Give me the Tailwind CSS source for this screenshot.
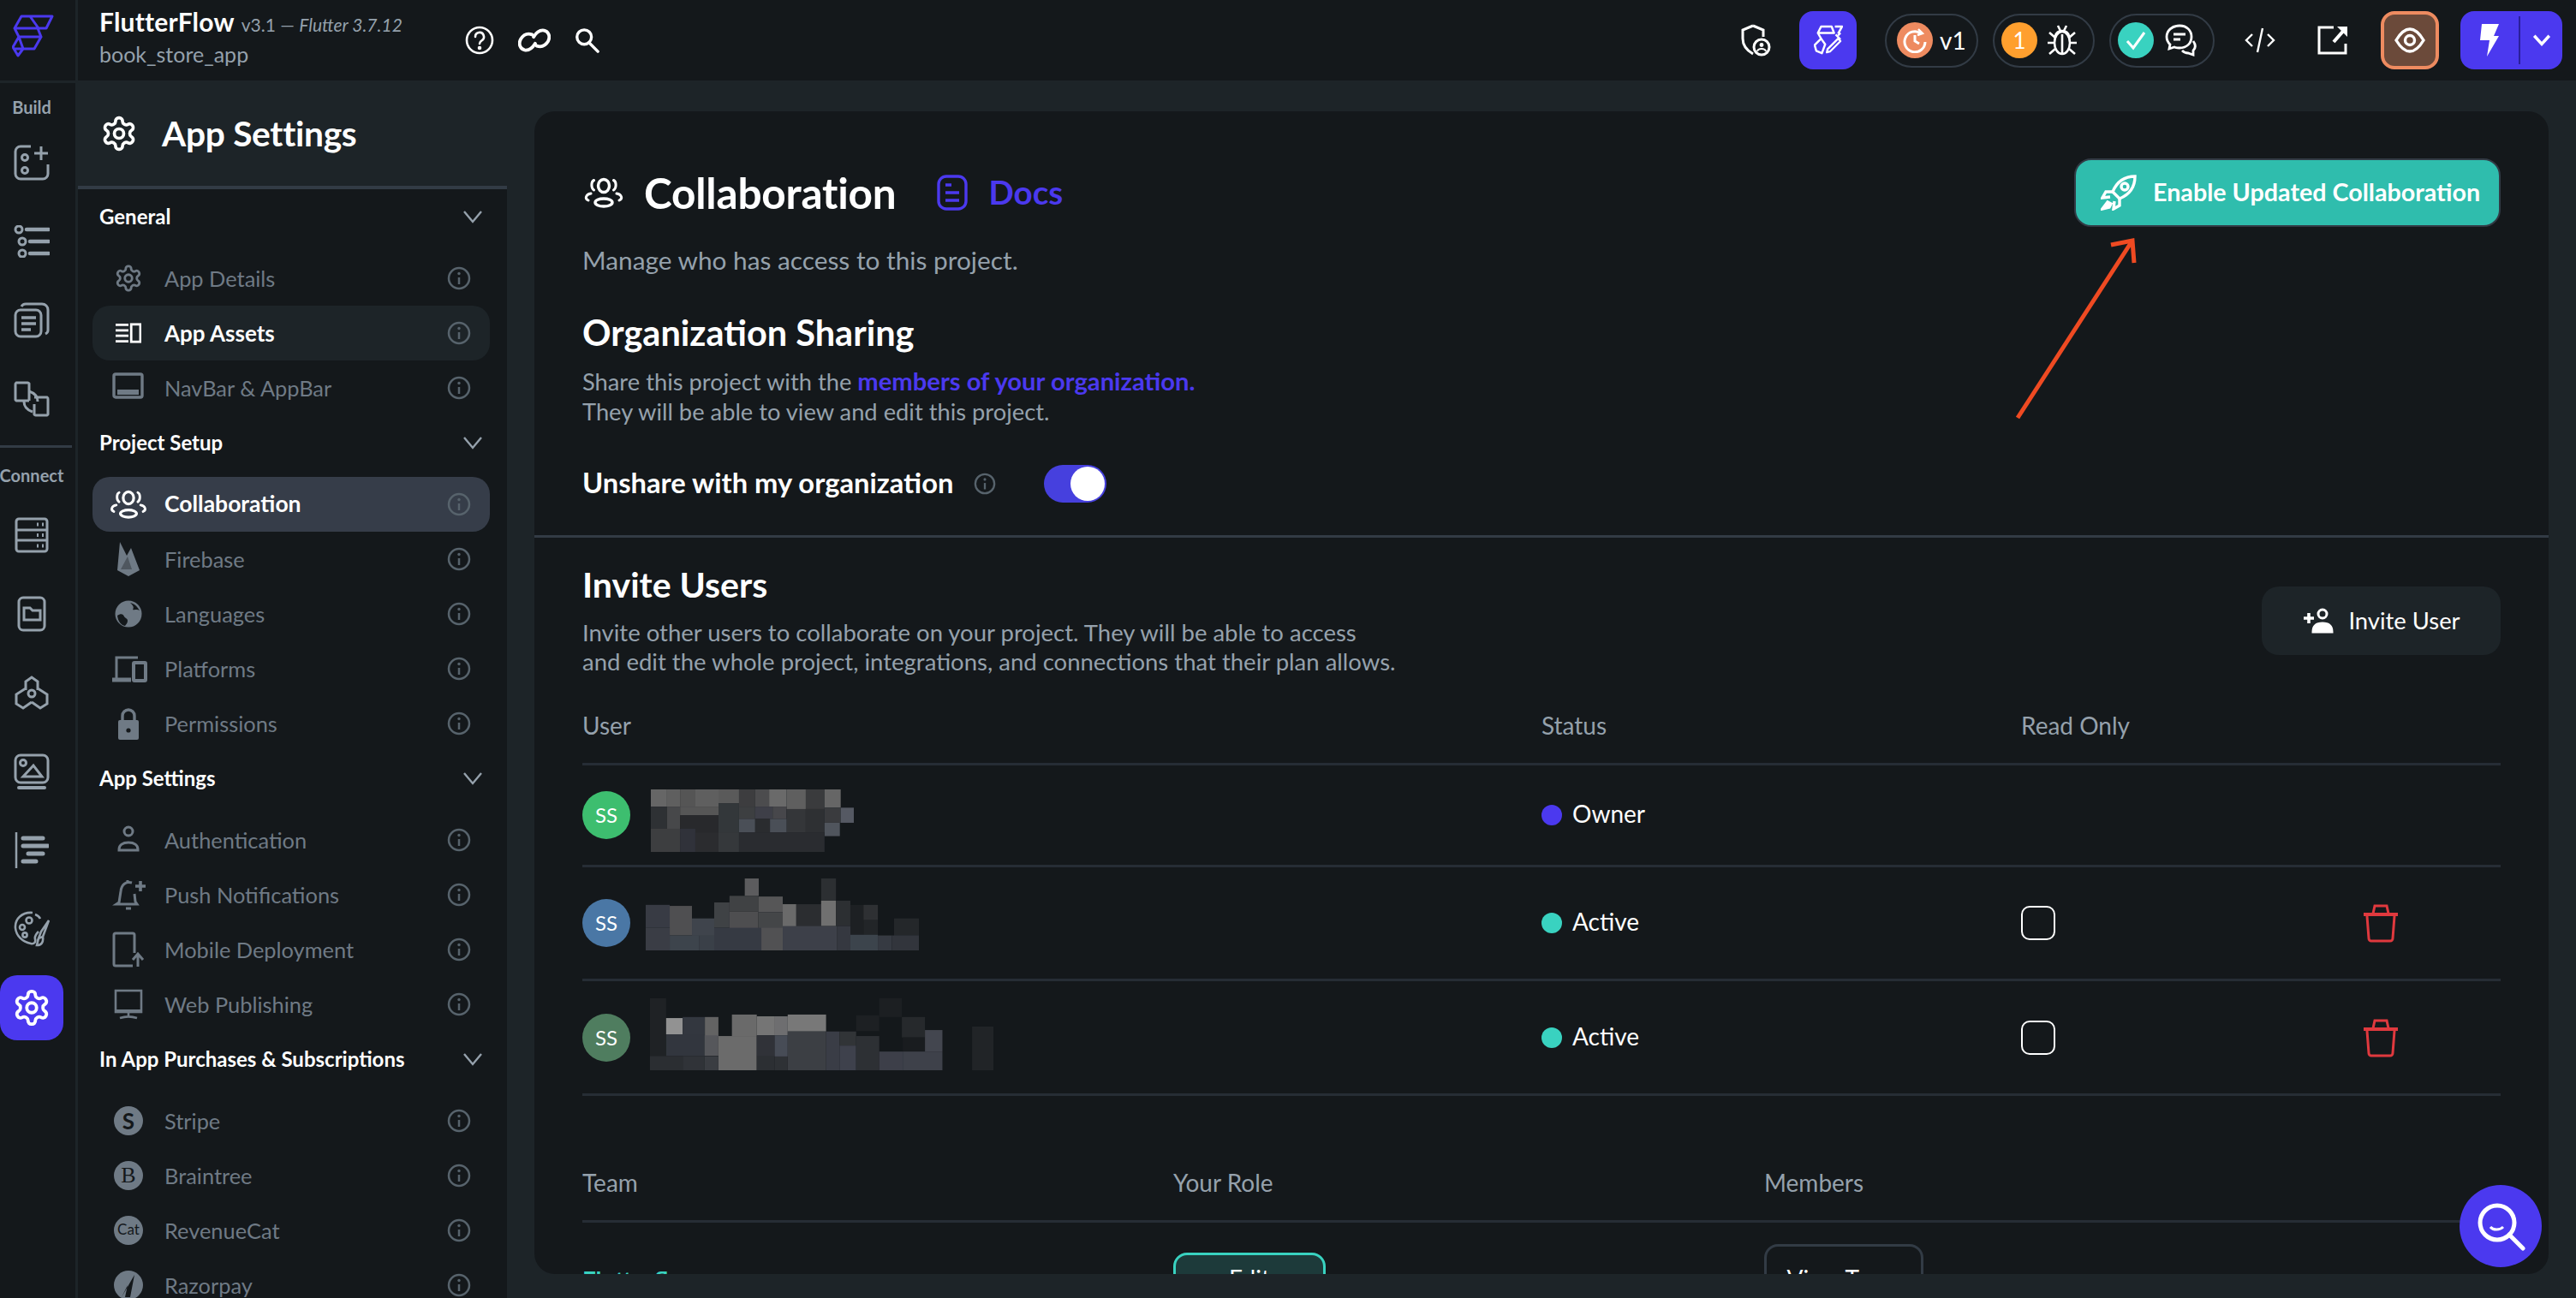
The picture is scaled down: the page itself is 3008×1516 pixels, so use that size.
<!DOCTYPE html>
<html lang="en">
  <head>
    <meta charset="UTF-8" />
    <title>FlutterFlow - App Settings</title>
    <script src="https://cdn.jsdelivr.net/npm/@tailwindcss/browser@4"></script>
  </head>
  <body class="bg-[#1d2428] font-['Lato',sans-serif]">
    <!-- shared icons -->
    <svg class="hidden">
      <symbol id="info" viewBox="0 0 28 28"><circle cx="14" cy="14" r="12" fill="none" stroke="currentColor" stroke-width="2.5" /><path d="M14 13v8" stroke="currentColor" stroke-width="2.5" /><circle cx="14" cy="8.5" r="1.7" fill="currentColor" /></symbol>
      <symbol id="chev" viewBox="0 0 24 16"><path d="M2 2l10 12L22 2" fill="none" stroke="currentColor" stroke-width="2.4" /></symbol>
      <symbol id="gear" viewBox="0 0 24 24"><path fill="none" stroke="currentColor" stroke-width="2" stroke-linejoin="round" d="M12.22 2h-.44a2 2 0 0 0-2 2v.18a2 2 0 0 1-1 1.73l-.43.25a2 2 0 0 1-2 0l-.15-.08a2 2 0 0 0-2.73.73l-.22.38a2 2 0 0 0 .73 2.73l.15.1a2 2 0 0 1 1 1.72v.51a2 2 0 0 1-1 1.74l-.15.09a2 2 0 0 0-.73 2.73l.22.38a2 2 0 0 0 2.73.73l.15-.08a2 2 0 0 1 2 0l.43.25a2 2 0 0 1 1 1.73V20a2 2 0 0 0 2 2h.44a2 2 0 0 0 2-2v-.18a2 2 0 0 1 1-1.73l.43-.25a2 2 0 0 1 2 0l.15.08a2 2 0 0 0 2.73-.73l.22-.39a2 2 0 0 0-.73-2.73l-.15-.08a2 2 0 0 1-1-1.74v-.5a2 2 0 0 1 1-1.74l.15-.09a2 2 0 0 0 .73-2.73l-.22-.38a2 2 0 0 0-2.73-.73l-.15.08a2 2 0 0 1-2 0l-.43-.25a2 2 0 0 1-1-1.73V4a2 2 0 0 0-2-2z" /><circle cx="12" cy="12" r="3" fill="none" stroke="currentColor" stroke-width="2" /></symbol>
      <symbol id="team" viewBox="0 0 46 36"><ellipse cx="23" cy="10" rx="6.5" ry="7.5" fill="none" stroke="currentColor" stroke-width="3.4" /><ellipse cx="23" cy="29.5" rx="10" ry="4.5" fill="none" stroke="currentColor" stroke-width="3.4" /><path d="M11.5 3.5C8 5 8 13 11.5 15M34.5 3.5C38 5 38 13 34.5 15M8 19C2 20 0.5 25 5 27M38 19c6 1 7.5 6 3 8" fill="none" stroke="currentColor" stroke-width="3" stroke-linecap="round" /></symbol>
      <symbol id="trash" viewBox="0 0 40 46"><path d="M0 13h40" stroke="currentColor" stroke-width="4" /><path d="M11 12l2-9h14l2 9M4 15l2 26a3 3 0 0 0 3 3h22a3 3 0 0 0 3-3l2-26" fill="none" stroke="currentColor" stroke-width="3" /></symbol>
    </svg>

    <div class="relative w-[3008px] h-[1516px] overflow-hidden flex flex-col">
      <!-- top bar -->
      <header class="h-[94px] shrink-0 bg-[#14181b] flex items-center text-white">
        <div class="w-[91px] h-full shrink-0 border-r-[3px] border-[#1d2428] pl-[14px] flex items-center">
          <svg class="w-[50px] h-[52px] mb-[8px] text-[#4b39ef]" viewBox="14 17 50 52" fill="none" stroke="currentColor" stroke-width="3" stroke-linejoin="round" stroke-linecap="round"><path d="M25 19H61L54 33H17zM35 19L45 33M17 33L22 43H48L40 57H27M44 33L48 43M22 43L15 55L21 65L27 57M22 43L27 57M17 57H27" /></svg>
        </div>
        <div class="pl-[25px] w-[429px] shrink-0">
          <div class="flex items-baseline gap-[8px] h-[32px] whitespace-nowrap">
            <span class="text-[30px] leading-[32px] font-bold tracking-[0.2px]">FlutterFlow</span>
            <span class="text-[21px] leading-[32px] text-[#95a1ac]">v3.1 — <i>Flutter 3.7.12</i></span>
          </div>
          <div class="text-[25px] leading-[44px] text-[#95a1ac]">book_store_app</div>
        </div>
        <svg class="w-[34px] h-[34px] ml-[23px]" viewBox="0 0 34 34" fill="none" stroke="currentColor" stroke-width="2.6"><circle cx="17" cy="17" r="15" /><path d="M12 13a5 5 0 1 1 7.5 4.3c-1.7 1-2.5 1.9-2.5 3.7" stroke-linecap="round" /><circle cx="17" cy="26" r="1" fill="currentColor" /></svg>
        <svg class="w-[38px] h-[32px] ml-[28px]" viewBox="0 0 40 32" fill="none" stroke="currentColor" stroke-width="4"><path d="M17 9C11 7 6 10 3 15c-3 6 0 12 5 13 6 1 10-3 13-8M23 23c6 2 11-1 14-6 3-6 0-12-5-13-6-1-10 3-13 8" stroke-linecap="round" /></svg>
        <svg class="w-[30px] h-[32px] ml-[27px]" viewBox="0 0 32 32" fill="none" stroke="currentColor" stroke-width="3.6"><circle cx="13" cy="12" r="9" /><path d="M19 19l11 11" stroke-linecap="round" /></svg>

        <div class="ml-auto flex items-center pr-[16px]">
          <svg class="w-[36px] h-[38px]" viewBox="0 0 36 38" fill="none" stroke="currentColor" stroke-width="3"><path d="M15 2l12 5v8M15 2L3 7v10c0 8 5 14 12 18" /><circle cx="25" cy="27" r="9" /><circle cx="25" cy="24.5" r="2.4" fill="currentColor" stroke="none" /><path d="M20 32c1-4 9-4 10 0" stroke-width="2" /></svg>
          <button class="ml-[33px] w-[67px] h-[68px] rounded-[16px] bg-[#4b39ef] flex items-center justify-center">
            <svg class="w-[34px] h-[36px]" viewBox="0 0 36 38" fill="none" stroke="currentColor" stroke-width="2.6" stroke-linejoin="round"><path d="M9 2h13l3 8H5zM26 2h9l-5 9M5 10l4 7" /><path d="M9 17l5 7-4 11-7-3-2-7z" /><path d="M17 30l13-13 3 3-13 13-4 1zM27 12l6 6M33 10l-3 3" stroke-width="2.4" /></svg>
          </button>
          <div class="ml-[33px] w-[109px] h-[63px] rounded-full border-2 border-[#323b45] flex items-center pl-[12px]">
            <div class="w-[42px] h-[42px] rounded-full bg-[#ee8b60] flex items-center justify-center">
              <svg class="w-[30px] h-[30px]" viewBox="0 0 30 30" fill="none" stroke="#fff" stroke-width="3"><path d="M22 7a12 12 0 1 0 5 10" /><path d="M15 9v7l5 3" /><path d="M19 2l5 5-6 2" stroke-width="2.4" /></svg>
            </div>
            <span class="ml-[8px] text-[28px]">v1</span>
          </div>
          <div class="ml-[17px] w-[119px] h-[63px] rounded-full border-2 border-[#323b45] flex items-center pl-[8px]">
            <div class="w-[42px] h-[42px] rounded-full bg-[#ff9f2e] flex items-center justify-center text-[26px]">1</div>
            <svg class="w-[36px] h-[38px] ml-[11px]" viewBox="0 0 36 38" fill="none" stroke="currentColor" stroke-width="2.6"><ellipse cx="18" cy="22" rx="9" ry="13" /><path d="M10 14c2-8 14-8 16 0M18 12v23M13 2l3 6M23 2l-3 6M1 22h8M27 22h8M3 10l7 6M33 10l-7 6M3 35l7-6M33 35l-7-6" /></svg>
          </div>
          <div class="ml-[17px] w-[123px] h-[63px] rounded-full border-2 border-[#323b45] flex items-center pl-[8px]">
            <div class="w-[42px] h-[42px] rounded-full bg-[#39d2c0] flex items-center justify-center">
              <svg class="w-[26px] h-[24px]" viewBox="0 0 26 24" fill="none" stroke="#fff" stroke-width="3"><path d="M3 13l7 8L23 3" /></svg>
            </div>
            <svg class="w-[38px] h-[38px] ml-[13px]" viewBox="0 0 38 38" fill="none" stroke="currentColor" stroke-width="2.8"><path d="M17 2C8 2 2 8 2 15c0 4 2 7 4 9l-1 5 6-2c2 1 4 1 6 1 9 0 14-6 14-13S26 2 17 2z" /><path d="M10 12h14M10 18h8" /><path d="M33 20c3 4 3 8 0 11v5l-6-2c-3 0-5-1-7-3" /></svg>
          </div>
          <svg class="w-[36px] h-[32px] ml-[35px]" viewBox="0 0 36 32" fill="none" stroke="currentColor" stroke-width="2.4"><path d="M9 9l-7 7 7 7M27 9l7 7-7 7M21 2l-6 28" /></svg>
          <svg class="w-[38px] h-[36px] ml-[48px]" viewBox="0 0 38 36" fill="none" stroke="currentColor" stroke-width="3"><path d="M20 3H3v30h31V22M3 3" /><path d="M20 20L34 4" stroke-width="4" /><path d="M24 2h12v12z" fill="currentColor" stroke="none" /></svg>
          <button class="ml-[37px] w-[68px] h-[68px] rounded-[16px] bg-[#6b4a3a] border-[4px] border-[#ee8b60] flex items-center justify-center">
            <svg class="w-[36px] h-[30px]" viewBox="0 0 36 30" fill="none" stroke="currentColor" stroke-width="3.4"><path d="M2 15C8 5 13 2 18 2s10 3 16 13c-6 10-11 13-16 13S8 25 2 15z" /><circle cx="18" cy="15" r="5.5" /></svg>
          </button>
          <button class="ml-[25px] w-[119px] h-[68px] rounded-[16px] bg-[#4b39ef] flex items-center">
            <span class="w-[68px] flex justify-center">
              <svg class="w-[24px] h-[38px]" viewBox="0 0 24 38" fill="currentColor"><path d="M3 0h20l-6 14h6L9 38l3-19H1z" /></svg>
            </span>
            <span class="h-[56px] border-l-2 border-[#2a1f9c]"></span>
            <span class="flex-1 flex justify-center">
              <svg class="w-[22px] h-[14px]" viewBox="0 0 24 16" fill="none" stroke="currentColor" stroke-width="4"><path d="M2 2l10 11L22 2" /></svg>
            </span>
          </button>
        </div>
      </header>

      <div class="flex flex-1 min-h-0">
        <!-- icon rail -->
        <nav class="w-[91px] shrink-0 bg-[#14181b] border-r-[3px] border-[#1d2428]">
          <div class="w-[88px] border-t-[3px] border-[#1d2428] text-[#95a1ac]">
            <div class="w-[74px] flex flex-col items-center">
              <div class="pt-[16px] pb-[7px] text-[20px] leading-[24px] font-bold">Build</div>
              <div class="h-[92px] flex items-center">
                <svg class="w-[42px] h-[42px]" viewBox="0 0 42 42" fill="none" stroke="currentColor" stroke-width="3"><path d="M20 2H8a6 6 0 0 0-6 6v26a6 6 0 0 0 6 6h26a6 6 0 0 0 6-6v-11" /><circle cx="13" cy="15" r="3.5" /><circle cx="13" cy="30" r="3.5" /><path d="M32 2v16M24 10h16" /></svg>
              </div>
              <div class="h-[92px] flex items-center">
                <svg class="w-[42px] h-[38px]" viewBox="0 0 42 38" fill="none" stroke="currentColor" stroke-width="3"><circle cx="6" cy="5" r="4" /><circle cx="10" cy="19" r="4" /><circle cx="10" cy="33" r="4" /><path d="M15 5h26M19 19h22M19 33h22" stroke-width="4.5" stroke-linecap="round" /></svg>
              </div>
              <div class="h-[92px] flex items-center">
                <svg class="w-[42px] h-[42px]" viewBox="0 0 42 42" fill="none" stroke="currentColor" stroke-width="3"><rect x="2" y="9" width="30" height="31" rx="6" /><path d="M9 5c1-2 3-3 5-3h19c4 0 7 3 7 7v24c0 2-1 3-3 4M7 4" /><path d="M9 18h17M9 25h17M9 32h11" stroke-width="3.4" /></svg>
              </div>
              <div class="h-[92px] flex items-center">
                <svg class="w-[42px] h-[42px]" viewBox="0 0 42 42" fill="none" stroke="currentColor" stroke-width="3"><path d="M18 23v-5a2 2 0 0 0 0 0V3a2 2 0 0 0-2-1H3a2 2 0 0 0-1 2v18a2 2 0 0 0 1 1h15" /><path d="M24 19h15a2 2 0 0 1 1 2v18a2 2 0 0 1-1 1H26a2 2 0 0 1-2-1V27" /><path d="M12 24c0 6 4 10 10 12M18 12c6 2 10 6 10 12" /></svg>
              </div>
            </div>
            <div class="mt-[8px] h-[3px] w-[84px] bg-[#323b45]"></div>
            <div class="w-[74px] flex flex-col items-center">
              <div class="pt-[20px] pb-[12px] text-[20px] leading-[24px] font-bold whitespace-nowrap">Connect</div>
              <div class="h-[92px] flex items-center">
                <svg class="w-[40px] h-[42px]" viewBox="0 0 40 42" fill="none" stroke="currentColor" stroke-width="3"><rect x="2" y="2" width="36" height="38" rx="3" /><path d="M2 15h36M2 27h36" /><path d="M26 8.5h2M32 8.5h2M26 21h2M32 21h2M26 33.5h2M32 33.5h2" stroke-width="4" /></svg>
              </div>
              <div class="h-[92px] flex items-center">
                <svg class="w-[34px] h-[42px]" viewBox="0 0 34 42" fill="none" stroke="currentColor" stroke-width="3"><rect x="2" y="2" width="30" height="38" rx="5" /><path d="M8 14h7l3 3h9v11H8z" /></svg>
              </div>
              <div class="h-[92px] flex items-center">
                <svg class="w-[42px] h-[42px]" viewBox="0 0 42 42" fill="none" stroke="currentColor" stroke-width="3"><path d="M14 18V8l7-5 7 5v10M14 16L3 23v11l8 5 10-7M28 16l11 7v11l-8 5-10-7" /><circle cx="21" cy="22" r="4" /></svg>
              </div>
              <div class="h-[92px] flex items-center">
                <svg class="w-[42px] h-[42px]" viewBox="0 0 42 42" fill="none" stroke="currentColor" stroke-width="3"><rect x="2" y="2" width="38" height="32" rx="6" /><circle cx="11" cy="11" r="3.5" /><path d="M11 27l12-13 10 13z" /><path d="M6 40h30" stroke-width="4" stroke-linecap="round" /></svg>
              </div>
              <div class="h-[92px] flex items-center">
                <svg class="w-[40px] h-[42px]" viewBox="0 0 40 42" fill="none" stroke="currentColor"><path d="M2 0v42" stroke-width="2.5" /><path d="M10 7h23M10 16h29M16 25h17M10 34h15" stroke-width="5" stroke-linecap="round" /></svg>
              </div>
              <div class="h-[92px] flex items-center">
                <svg class="w-[42px] h-[42px]" viewBox="0 0 42 42" fill="none" stroke="currentColor" stroke-width="2.6"><path d="M22 2C10 1 1 9 2 20c1 9 8 16 18 18 4 1 6-2 5-5-1-4 2-7 4-9M25 4c3 1 5 3 6 5" /><circle cx="18" cy="11" r="3.5" /><circle cx="10" cy="19" r="3" /><circle cx="13" cy="28" r="2.6" /><path d="M41 11L32 24l-3 8 5-2zM29 32l-2 8c5 0 8-3 7-10" /></svg>
              </div>
              <a class="mt-[8px] w-[74px] h-[76px] rounded-[20px] bg-[#4b39ef] flex items-center justify-center text-white">
                <svg class="w-[46px] h-[46px]"><use href="#gear" /></svg>
              </a>
            </div>
          </div>
        </nav>

        <!-- settings menu -->
        <aside class="w-[501px] shrink-0 bg-[#14181b] text-[#6f7a85] text-[25.4px] overflow-hidden">
          <div class="h-[127px] bg-[#1d2428] border-b-[4px] border-[#323b45] flex items-center pl-[26px] text-white">
            <svg class="w-[44px] h-[44px]"><use href="#gear" /></svg>
            <span class="ml-[28px] text-[40.7px] font-bold tracking-[-0.3px]">App Settings</span>
          </div>

          <div class="h-16 flex items-center justify-between pl-[25px] pr-[28px] text-[24px] text-white font-bold"><span>General</span><svg class="w-[24px] h-[16px] text-[#95a1ac]"><use href="#chev" /></svg></div>
          <div class="mt-2 ml-[17px] mr-[20px]">
            <a class="h-16 flex items-center pl-[20px] pr-[22px]">
              <svg class="w-[44px] h-[44px] shrink-0 p-[5px]"><use href="#gear" /></svg><span class="ml-[20px]">App Details</span><svg class="ml-auto w-[28px] h-[28px] text-[#57636c]"><use href="#info" /></svg>
            </a>
            <a class="h-16 flex items-center pl-[20px] pr-[22px] rounded-[20px] bg-[#1d2428] text-white text-[26px] font-bold">
              <svg class="w-[44px] h-[44px] shrink-0 p-[7px]" viewBox="0 0 28 22" fill="none" stroke="currentColor" stroke-width="2.6"><path d="M0 2h14M0 8h14M0 14h14M0 20h14" /><rect x="17" y="1.5" width="10" height="19" /></svg><span class="ml-[20px]">App Assets</span><svg class="ml-auto w-[28px] h-[28px] text-[#57636c]"><use href="#info" /></svg>
            </a>
            <a class="h-16 flex items-center pl-[20px] pr-[22px]">
              <svg class="w-[44px] h-[44px] shrink-0" viewBox="0 0 44 44" fill="none" stroke="currentColor" stroke-width="3.4"><rect x="5" y="6" width="33" height="27" rx="2" /><path d="M9 27h25" stroke-width="6" /></svg><span class="ml-[20px]">NavBar &amp; AppBar</span><svg class="ml-auto w-[28px] h-[28px] text-[#57636c]"><use href="#info" /></svg>
            </a>
          </div>

          <div class="h-16 flex items-center justify-between pl-[25px] pr-[28px] text-[24px] text-white font-bold"><span>Project Setup</span><svg class="w-[24px] h-[16px] text-[#95a1ac]"><use href="#chev" /></svg></div>
          <div class="mt-2 ml-[17px] mr-[20px]">
            <a class="h-16 flex items-center pl-[20px] pr-[22px] rounded-[20px] bg-[#363d49] text-white text-[26.5px] font-bold">
              <svg class="w-[44px] h-[34px] shrink-0"><use href="#team" /></svg><span class="ml-[20px]">Collaboration</span><svg class="ml-auto w-[28px] h-[28px] text-[#57636c]"><use href="#info" /></svg>
            </a>
            <a class="h-16 flex items-center pl-[20px] pr-[22px]">
              <svg class="w-[44px] h-[44px] shrink-0" viewBox="0 0 44 44" fill="#6f7a85"><path d="M9 35L12 2l8 16 5-9 10 26-13 7z" /><path d="M13 34l8-15 5 15z" fill="#14181b" opacity=".35" /></svg><span class="ml-[20px]">Firebase</span><svg class="ml-auto w-[28px] h-[28px] text-[#57636c]"><use href="#info" /></svg>
            </a>
            <a class="h-16 flex items-center pl-[20px] pr-[22px]">
              <svg class="w-[44px] h-[44px] shrink-0" viewBox="0 0 44 44"><circle cx="22" cy="22" r="15.5" fill="currentColor" /><path d="M9 24c4-3 7-2 8 1 1 2 4 2 4 5 0 3-2 4-3 6-5-1-8-5-9-12zM24 9c3 3 5 5 3 8 2 1 5-1 8 1-3-5-6-8-11-9z" fill="#14181b" /></svg><span class="ml-[20px]">Languages</span><svg class="ml-auto w-[28px] h-[28px] text-[#57636c]"><use href="#info" /></svg>
            </a>
            <a class="h-16 flex items-center pl-[20px] pr-[22px]">
              <svg class="w-[44px] h-[44px] shrink-0" viewBox="0 0 44 44" fill="none" stroke="currentColor" stroke-width="3"><path d="M33 9H8v24" /><path d="M3 35h22" stroke-width="5" /><rect x="28" y="15" width="14" height="21" rx="1" stroke-width="4" /></svg><span class="ml-[20px]">Platforms</span><svg class="ml-auto w-[28px] h-[28px] text-[#57636c]"><use href="#info" /></svg>
            </a>
            <a class="h-16 flex items-center pl-[20px] pr-[22px]">
              <svg class="w-[44px] h-[44px] shrink-0" viewBox="0 0 44 44"><path d="M15 19v-6a7 7 0 0 1 14 0v6" fill="none" stroke="currentColor" stroke-width="3.4" /><rect x="10" y="18" width="24" height="23" rx="2" fill="currentColor" /><circle cx="22" cy="30" r="2.6" fill="#14181b" /></svg><span class="ml-[20px]">Permissions</span><svg class="ml-auto w-[28px] h-[28px] text-[#57636c]"><use href="#info" /></svg>
            </a>
          </div>

          <div class="h-16 flex items-center justify-between pl-[25px] pr-[28px] text-[24px] text-white font-bold"><span>App Settings</span><svg class="w-[24px] h-[16px] text-[#95a1ac]"><use href="#chev" /></svg></div>
          <div class="mt-2 ml-[17px] mr-[20px]">
            <a class="h-16 flex items-center pl-[20px] pr-[22px]">
              <svg class="w-[44px] h-[44px] shrink-0" viewBox="0 0 44 44" fill="none" stroke="currentColor" stroke-width="3"><circle cx="22" cy="12" r="5" /><path d="M11 33c0-5 4-8 11-8s11 3 11 8v1H11z" /></svg><span class="ml-[20px]">Authentication</span><svg class="ml-auto w-[28px] h-[28px] text-[#57636c]"><use href="#info" /></svg>
            </a>
            <a class="h-16 flex items-center pl-[20px] pr-[22px]">
              <svg class="w-[44px] h-[44px] shrink-0" viewBox="0 0 44 44" fill="none" stroke="currentColor" stroke-width="3"><path d="M26 8c-7-2-12 2-13 10l-2 13-3 2h24l-2-3-1-9" /><path d="M19 38h6M21 8V5" /><path d="M36 6v12M30 12h12" stroke-width="3.6" /></svg><span class="ml-[20px]">Push Notifications</span><svg class="ml-auto w-[28px] h-[28px] text-[#57636c]"><use href="#info" /></svg>
            </a>
            <a class="h-16 flex items-center pl-[20px] pr-[22px]">
              <svg class="w-[44px] h-[44px] shrink-0" viewBox="0 0 44 44" fill="none" stroke="currentColor" stroke-width="3"><path d="M29 26V5a2 2 0 0 0-2-2H7a2 2 0 0 0-2 2v34a2 2 0 0 0 2 2h20" /><path d="M33 42V28M27 34l6-7 6 7" stroke-width="3" /></svg><span class="ml-[20px]">Mobile Deployment</span><svg class="ml-auto w-[28px] h-[28px] text-[#57636c]"><use href="#info" /></svg>
            </a>
            <a class="h-16 flex items-center pl-[20px] pr-[22px]">
              <svg class="w-[44px] h-[44px] shrink-0" viewBox="0 0 44 44" fill="none" stroke="currentColor" stroke-width="2.6"><rect x="7" y="6" width="30" height="25" /><path d="M7 30h30" stroke-width="4" /><path d="M22 32v4M12 38c6-2 14-2 20 0" /></svg><span class="ml-[20px]">Web Publishing</span><svg class="ml-auto w-[28px] h-[28px] text-[#57636c]"><use href="#info" /></svg>
            </a>
          </div>

          <div class="h-16 flex items-center justify-between pl-[25px] pr-[28px] text-[24px] text-white font-bold"><span>In App Purchases &amp; Subscriptions</span><svg class="w-[24px] h-[16px] text-[#95a1ac]"><use href="#chev" /></svg></div>
          <div class="mt-2 ml-[17px] mr-[20px]">
            <a class="h-16 flex items-center pl-[20px] pr-[22px]">
              <span class="w-[44px] shrink-0 flex justify-center"><span class="w-[34px] h-[34px] rounded-full bg-[#6f7a85] text-[#14181b] text-[26px] font-bold leading-[34px] text-center">S</span></span><span class="ml-[20px]">Stripe</span><svg class="ml-auto w-[28px] h-[28px] text-[#57636c]"><use href="#info" /></svg>
            </a>
            <a class="h-16 flex items-center pl-[20px] pr-[22px]">
              <span class="w-[44px] shrink-0 flex justify-center"><span class="w-[34px] h-[34px] rounded-full bg-[#6f7a85] text-[#14181b] text-[26px] font-['Liberation_Serif',serif] leading-[34px] text-center">B</span></span><span class="ml-[20px]">Braintree</span><svg class="ml-auto w-[28px] h-[28px] text-[#57636c]"><use href="#info" /></svg>
            </a>
            <a class="h-16 flex items-center pl-[20px] pr-[22px]">
              <span class="w-[44px] shrink-0 flex justify-center"><span class="w-[34px] h-[34px] rounded-full bg-[#6f7a85] text-[#14181b] text-[17px] leading-[32px] text-center">Cat</span></span><span class="ml-[20px]">RevenueCat</span><svg class="ml-auto w-[28px] h-[28px] text-[#57636c]"><use href="#info" /></svg>
            </a>
            <a class="h-16 flex items-center pl-[20px] pr-[22px]">
              <svg class="w-[44px] h-[44px] shrink-0" viewBox="0 0 44 44"><circle cx="22" cy="22" r="17" fill="currentColor" /><path d="M29 10l-5 26h-6l3-14-7 14z" fill="#14181b" /></svg><span class="ml-[20px]">Razorpay</span><svg class="ml-auto w-[28px] h-[28px] text-[#57636c]"><use href="#info" /></svg>
            </a>
          </div>
        </aside>

        <!-- main panel -->
        <main class="flex-1 pt-[36px] px-[32px]">
          <div class="h-[1358px] rounded-[24px] bg-[#14181b] overflow-hidden text-white">
            <section class="pt-[55px] px-[56px] pb-[38px]">
              <div class="flex items-center h-[80px]">
                <svg class="w-[46px] h-[36px] ml-[2px]"><use href="#team" /></svg>
                <h1 class="ml-[24px] text-[49.5px] leading-[60px] font-bold tracking-[-0.2px]">Collaboration</h1>
                <svg class="ml-[47px] w-[36px] h-[42px] text-[#4b39ef]" viewBox="0 0 36 42" fill="none" stroke="currentColor" stroke-width="3.4"><rect x="2" y="2" width="32" height="38" rx="9" /><path d="M10 12h7M10 21h16M10 30h16" /></svg>
                <span class="ml-[25px] text-[38.5px] font-bold text-[#4b39ef]">Docs</span>
                <button class="ml-auto w-[498px] h-[80px] rounded-[20px] bg-[#2fbdad] border-2 border-[#323b45] flex items-center pl-[29px] text-[28.7px] font-bold whitespace-nowrap">
                  <svg class="w-[42px] h-[42px] shrink-0" viewBox="0 0 42 42" fill="none" stroke="currentColor" stroke-width="3.4"><path d="M40 2c-12 0-21 6-26 18l8 8c12-5 18-14 18-26z" /><circle cx="28" cy="14" r="4" /><path d="M14 20H6l-4 7 9-1M22 28v8l-7 4 1-9" /><path d="M8 32l-6 8 8-2 2-4z" fill="currentColor" /></svg>
                  <span class="ml-[19px]">Enable Updated Collaboration</span>
                </button>
              </div>
              <p class="mt-[21px] text-[29.8px] leading-[36px] text-[#95a1ac]">Manage who has access to this project.</p>
              <h2 class="mt-[42px] text-[41.5px] leading-[48px] font-bold">Organization Sharing</h2>
              <p class="mt-[15px] h-[71px] text-[27.3px] leading-[35px] text-[#95a1ac]">Share this project with the <span class="text-[29.2px] leading-[35px] text-[#4b39ef] font-bold">members of your organization.</span><br />They will be able to view and edit this project.</p>
              <div class="mt-[45px] flex items-center h-[44px]">
                <span class="pb-[3px] text-[32.7px] font-bold">Unshare with my organization</span>
                <svg class="ml-[24px] w-[26px] h-[26px] text-[#57636c]"><use href="#info" /></svg>
                <div class="ml-[56px] w-[73px] h-[44px] rounded-full bg-[#4640de] flex items-center justify-end pr-[2px]">
                  <div class="w-[40px] h-[40px] rounded-full bg-white"></div>
                </div>
              </div>
            </section>

            <section class="border-t-[3px] border-[#323b45] pt-[31px] px-[56px]">
              <div class="flex items-start justify-between">
                <div>
                  <h2 class="text-[41px] leading-[48px] font-bold">Invite Users</h2>
                  <p class="mt-[15px] text-[27.5px] leading-[34px] text-[#95a1ac]">Invite other users to collaborate on your project. They will be able to access<br />and edit the whole project, integrations, and connections that their plan allows.</p>
                </div>
                <button class="mt-[26px] w-[279px] h-[80px] rounded-[20px] bg-[#1d2428] flex items-center justify-center text-[27.4px]">
                  <svg class="w-[40px] h-[30px]" viewBox="0 0 40 30" fill="none" stroke="currentColor" stroke-width="3"><circle cx="24" cy="7" r="5" /><path d="M13 28c0-7 4-10 11-10s11 3 11 10z" fill="currentColor" /><path d="M8 6v12M2 12h12" stroke-width="3.6" /></svg>
                  <span class="ml-[14px]">Invite User</span>
                </button>
              </div>

              <div class="mt-[39px] grid grid-cols-[1120px_560px_1fr] pb-[26px] border-b-[3px] border-[#262d35] text-[28px] leading-[36px] text-[#95a1ac]">
                <span>User</span><span>Status</span><span>Read Only</span>
              </div>

              <div class="h-[119px] grid grid-cols-[1120px_560px_1fr] items-center border-b-[3px] border-[#262d35] text-[28px]">
                <div class="flex items-center">
                  <div class="w-[56px] h-[56px] rounded-full bg-[#3dbe6f] flex items-center justify-center text-[24px]">SS</div>
                  <svg class="ml-[24px] mt-[12px] w-[237px] h-[73px]" viewBox="235 688 465 178" preserveAspectRatio="none">
                    <rect x="235" y="688" width="37" height="49" fill="#666" /><rect x="272" y="688" width="30" height="49" fill="#5f5f5f" /><rect x="302" y="688" width="35" height="49" fill="#555" /><rect x="337" y="688" width="53" height="49" fill="#5f5f5f" /><rect x="390" y="688" width="47" height="40" fill="#5a5a5a" /><rect x="437" y="688" width="37" height="49" fill="#3d3d3f" /><rect x="474" y="688" width="32" height="49" fill="#4c4c4e" /><rect x="506" y="688" width="40" height="49" fill="#6a6a6a" /><rect x="546" y="688" width="44" height="56" fill="#5f5f5f" /><rect x="590" y="688" width="43" height="56" fill="#3a3b3d" /><rect x="633" y="688" width="37" height="52" fill="#666" />
                    <rect x="235" y="737" width="37" height="73" fill="#2e3134" /><rect x="272" y="737" width="30" height="73" fill="#47484a" /><rect x="302" y="737" width="88" height="25" fill="#565656" /><rect x="302" y="762" width="88" height="48" fill="#28292c" /><rect x="390" y="728" width="47" height="82" fill="#33373a" /><rect x="437" y="737" width="37" height="35" fill="#3d3f41" /><rect x="474" y="737" width="40" height="35" fill="#3e3f48" /><rect x="514" y="737" width="32" height="35" fill="#47474b" /><rect x="546" y="744" width="44" height="66" fill="#343639" /><rect x="590" y="744" width="43" height="66" fill="#2e3033" /><rect x="633" y="740" width="37" height="43" fill="#3a3b3e" /><rect x="670" y="740" width="30" height="43" fill="#555963" />
                    <rect x="437" y="772" width="37" height="38" fill="#4a4f57" /><rect x="474" y="772" width="34" height="38" fill="#2a2c2f" /><rect x="508" y="772" width="38" height="38" fill="#4a4f57" /><rect x="633" y="783" width="35" height="38" fill="#50555d" />
                    <rect x="235" y="800" width="67" height="66" fill="#3d3e40" /><rect x="302" y="800" width="35" height="66" fill="#30323a" /><rect x="337" y="810" width="53" height="56" fill="#2b2c2f" /><rect x="390" y="810" width="47" height="56" fill="#35383b" /><rect x="437" y="810" width="196" height="56" fill="#2a2c30" />
                  </svg>
                </div>
                <div class="flex items-center"><span class="w-[24px] h-[24px] rounded-full bg-[#4b39ef]"></span><span class="ml-[12px] pb-[4px]">Owner</span></div>
                <div></div>
              </div>

              <div class="h-[133px] grid grid-cols-[1120px_560px_1fr] items-center border-b-[3px] border-[#262d35] text-[28px]">
                <div class="flex items-center">
                  <div class="w-[56px] h-[56px] rounded-full bg-[#4a77a5] flex items-center justify-center text-[24px]">SS</div>
                  <svg class="ml-[18px] -mt-[20px] w-[319px] h-[84px]" viewBox="223 943 626 207" preserveAspectRatio="none">
                    <rect x="450" y="943" width="32" height="50" fill="#5c5c5e" /><rect x="625" y="943" width="34" height="65" fill="#2c2f32" /><rect x="415" y="993" width="66" height="45" fill="#404244" /><rect x="481" y="995" width="56" height="45" fill="#565657" /><rect x="380" y="1012" width="35" height="73" fill="#3f4245" /><rect x="223" y="1019" width="55" height="66" fill="#383b44" /><rect x="278" y="1022" width="51" height="85" fill="#4f4f51" /><rect x="329" y="1058" width="51" height="50" fill="#3f444c" /><rect x="415" y="1038" width="66" height="50" fill="#4e4e50" /><rect x="481" y="1040" width="56" height="48" fill="#444648" /><rect x="537" y="1017" width="31" height="64" fill="#6a6a6a" /><rect x="568" y="1017" width="57" height="64" fill="#2b2d30" /><rect x="625" y="1007" width="34" height="73" fill="#707070" /><rect x="659" y="1007" width="33" height="73" fill="#2c2f32" /><rect x="692" y="1019" width="30" height="86" fill="#1d2023" /><rect x="722" y="1019" width="33" height="44" fill="#2e3033" /><rect x="722" y="1063" width="33" height="42" fill="#222528" /><rect x="792" y="1058" width="57" height="50" fill="#24272a" />
                    <rect x="223" y="1085" width="55" height="65" fill="#3a3d45" /><rect x="278" y="1107" width="67" height="43" fill="#3d444c" /><rect x="345" y="1107" width="35" height="43" fill="#3a4048" /><rect x="380" y="1085" width="108" height="65" fill="#363a43" /><rect x="488" y="1085" width="49" height="65" fill="#515153" /><rect x="537" y="1080" width="124" height="70" fill="#3d4049" /><rect x="661" y="1080" width="31" height="70" fill="#353840" /><rect x="692" y="1105" width="63" height="45" fill="#3c444c" /><rect x="755" y="1107" width="32" height="43" fill="#363a42" /><rect x="787" y="1107" width="62" height="43" fill="#32353c" />
                  </svg>
                </div>
                <div class="flex items-center"><span class="w-[24px] h-[24px] rounded-full bg-[#39d2c0]"></span><span class="ml-[12px] pb-[4px]">Active</span></div>
                <div class="flex items-center">
                  <span class="w-[40px] h-[40px] rounded-[10px] border-2 border-white"></span>
                  <svg class="ml-[360px] w-[40px] h-[46px] text-[#e0393e]"><use href="#trash" /></svg>
                </div>
              </div>

              <div class="h-[134px] grid grid-cols-[1120px_560px_1fr] items-center border-b-[3px] border-[#262d35] text-[28px]">
                <div class="flex items-center">
                  <div class="w-[56px] h-[56px] rounded-full bg-[#4f7d5f] flex items-center justify-center text-[24px]">SS</div>
                  <svg class="ml-[23px] -mt-[8px] w-[401px] h-[84px]" viewBox="233 1287 788 204" preserveAspectRatio="none">
                    <rect x="233" y="1287" width="37" height="170" fill="#1f2225" /><rect x="270" y="1343" width="38" height="46" fill="#929292" /><rect x="308" y="1340" width="51" height="52" fill="#33373f" /><rect x="359" y="1340" width="31" height="54" fill="#636363" /><rect x="421" y="1333" width="57" height="61" fill="#6a6a6a" /><rect x="478" y="1338" width="40" height="54" fill="#757575" /><rect x="518" y="1338" width="31" height="54" fill="#6e6e70" /><rect x="549" y="1333" width="88" height="48" fill="#787878" /><rect x="759" y="1287" width="52" height="53" fill="#1c1f22" /><rect x="706" y="1335" width="53" height="45" fill="#1d2023" /><rect x="811" y="1340" width="53" height="58" fill="#26292c" />
                    <rect x="270" y="1389" width="88" height="62" fill="#32363e" /><rect x="358" y="1392" width="32" height="58" fill="#56575b" /><rect x="390" y="1394" width="88" height="97" fill="#6b6b6b" /><rect x="478" y="1392" width="41" height="60" fill="#303238" /><rect x="519" y="1392" width="30" height="60" fill="#474c56" /><rect x="549" y="1381" width="88" height="110" fill="#3c3f44" /><rect x="637" y="1381" width="31" height="110" fill="#3a3d46" /><rect x="668" y="1381" width="38" height="40" fill="#313437" /><rect x="668" y="1421" width="38" height="70" fill="#3e414c" /><rect x="706" y="1394" width="53" height="97" fill="#2d3034" /><rect x="759" y="1438" width="54" height="53" fill="#3d3f49" /><rect x="813" y="1398" width="51" height="40" fill="#191c1f" /><rect x="813" y="1438" width="91" height="53" fill="#3e414a" /><rect x="864" y="1377" width="40" height="61" fill="#43464f" />
                    <rect x="233" y="1451" width="75" height="40" fill="#2b2e32" /><rect x="308" y="1451" width="50" height="40" fill="#303338" /><rect x="358" y="1451" width="32" height="40" fill="#3a3d42" /><rect x="478" y="1452" width="41" height="39" fill="#2c2f33" /><rect x="519" y="1452" width="30" height="39" fill="#2e3135" /><rect x="972" y="1367" width="49" height="124" fill="#212427" />
                  </svg>
                </div>
                <div class="flex items-center"><span class="w-[24px] h-[24px] rounded-full bg-[#39d2c0]"></span><span class="ml-[12px] pb-[4px]">Active</span></div>
                <div class="flex items-center">
                  <span class="w-[40px] h-[40px] rounded-[10px] border-2 border-white"></span>
                  <svg class="ml-[360px] w-[40px] h-[46px] text-[#e0393e]"><use href="#trash" /></svg>
                </div>
              </div>

              <div class="mt-[83px] grid grid-cols-[690px_690px_1fr] pb-[26px] border-b-[3px] border-[#262d35] text-[28px] leading-[36px] text-[#95a1ac]">
                <span>Team</span><span>Your Role</span><span>Members</span>
              </div>
              <div class="grid grid-cols-[690px_690px_1fr] items-start text-[28px]">
                <span class="mt-[46px] font-bold text-[#39d2c0]">Flutterflow</span>
                <button class="mt-[35px] w-[178px] h-[60px] rounded-[16px] bg-[#1d3a3a] border-[3px] border-[#39d2c0]">Edit</button>
                <button class="mt-[25px] w-[186px] h-[80px] rounded-[16px] border-[3px] border-[#323b45]">View Team</button>
              </div>
            </section>
          </div>
        </main>
      </div>

      <!-- search button -->
      <button class="absolute right-[40px] bottom-[36px] w-[96px] h-[96px] rounded-full bg-[#4b39ef] flex items-center justify-center">
        <svg class="w-[58px] h-[58px]" viewBox="0 0 58 58" fill="none" stroke="#fff" stroke-width="5"><circle cx="25" cy="25" r="20" /><path d="M39 39l16 16" stroke-linecap="round" /><path d="M17 30c3 4 11 4 15 0" stroke-width="3" /></svg>
      </button>

      <!-- annotation arrow -->
      <svg class="absolute left-[2340px] top-[270px] w-[160px] h-[230px]" viewBox="0 0 160 230" fill="none" stroke="#ef4a22" stroke-width="5"><path d="M16 218L148 14" /><path d="M125 16l25-5 2 26" /></svg>
    </div>
  </body>
</html>
